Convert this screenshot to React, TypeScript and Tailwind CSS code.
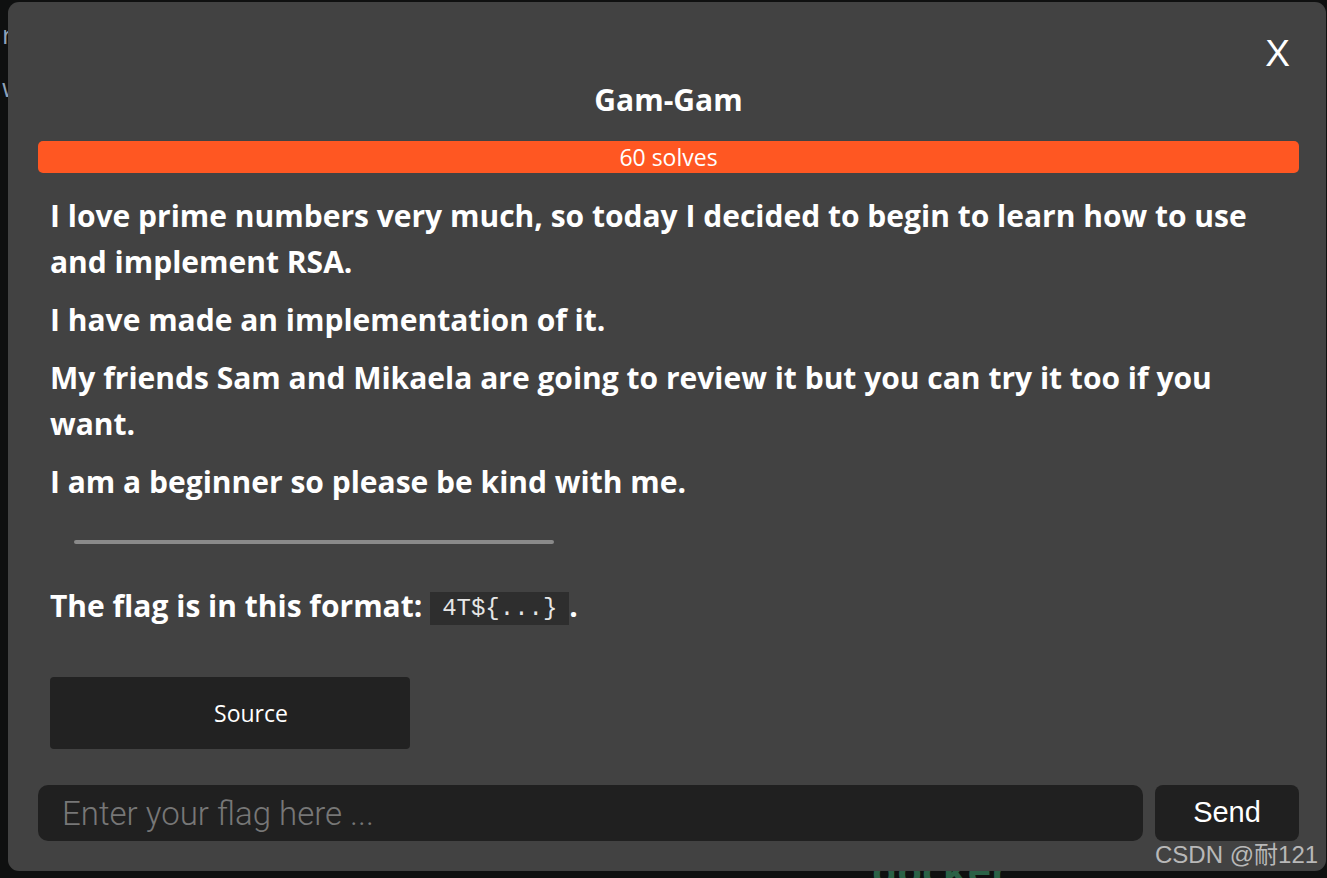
const paragraphs = [
  'I love prime numbers very much, so today I decided to begin to learn how to use and implement RSA.',
  'I have made an implementation of it.',
  'My friends Sam and Mikaela are going to review it but you can try it too if you want.',
  'I am a beginner so please be kind with me.',
]

export default function App() {
  return (
    <div className="relative w-[1327px] h-[878px] overflow-hidden bg-[#0f1010] font-['Open_Sans',sans-serif]">
      {/* page behind the dialog */}
      <div className="pt-[8px] pl-[2px] text-[26px] leading-[53px] text-[#8fa3b8]">
        <p>run</p>
        <p>wait</p>
      </div>
      <div className="absolute left-[872px] top-[846px] text-[40px] leading-[48px] font-bold text-[#2b6146]">docker</div>

      {/* dialog */}
      <div className="absolute left-[8px] top-[2px] w-[1318px] h-[869px] rounded-[11px] bg-[#424242] pl-[30px] pr-[27px] pt-[78px] text-white flex flex-col">
        <button className="absolute right-[36px] top-[34px] text-[37px] leading-[36px] font-['Liberation_Sans',sans-serif] text-white">
          X
        </button>

        <h2 className="text-center text-[30px] leading-[40px] font-bold">Gam-Gam</h2>

        <div className="mt-[21px] h-[32px] rounded-[5px] bg-[#ff5722] text-center text-[23px] leading-[32px]">
          60 solves
        </div>

        <div className="mt-[20px] pl-[12px] pr-[20px] flex flex-col gap-[12px] text-[30px] leading-[46px] font-bold">
          {paragraphs.map((p) => (
            <p key={p}>{p}</p>
          ))}
        </div>

        <div className="ml-[36px] mt-[35px] w-[480px] h-[4px] rounded-full bg-[#8a8a8a]" />

        <p className="mt-[39px] pl-[12px] text-[30px] leading-[46px] font-bold">
          The flag is in this format:{' '}
          <code className="inline-block align-middle h-[33px] px-[12px] bg-[#2e2e2e] text-[24px] leading-[33px] font-normal font-['Liberation_Mono',monospace] text-[#e6e6e6]">
            4T{'${...}'}
          </code>
          .
        </p>

        <div className="mt-[48px] pl-[12px]">
          <button className="w-[360px] h-[72px] pl-[42px] rounded-[4px] bg-[#222222] text-[23px] text-white">
            Source
          </button>
        </div>

        <div className="mt-[36px] flex gap-[12px]">
          <input
            className="flex-1 h-[56px] rounded-[10px] bg-[#202020] pl-[24px] text-[33px] font-light font-['Roboto',sans-serif] text-white placeholder:text-[#777777] outline-none"
            placeholder="Enter your flag here ..."
          />
          <button className="w-[144px] h-[56px] rounded-[8px] bg-[#202020] text-[29px] font-['Liberation_Sans',sans-serif] text-white">
            Send
          </button>
        </div>
      </div>

      {/* watermark */}
      <div className="absolute left-[1155px] top-[841px] text-[24px] leading-[28px] text-[#b8b8b8] font-['Liberation_Sans','Noto_Sans_CJK_SC',sans-serif]">
        CSDN @耐121
      </div>
    </div>
  )
}
